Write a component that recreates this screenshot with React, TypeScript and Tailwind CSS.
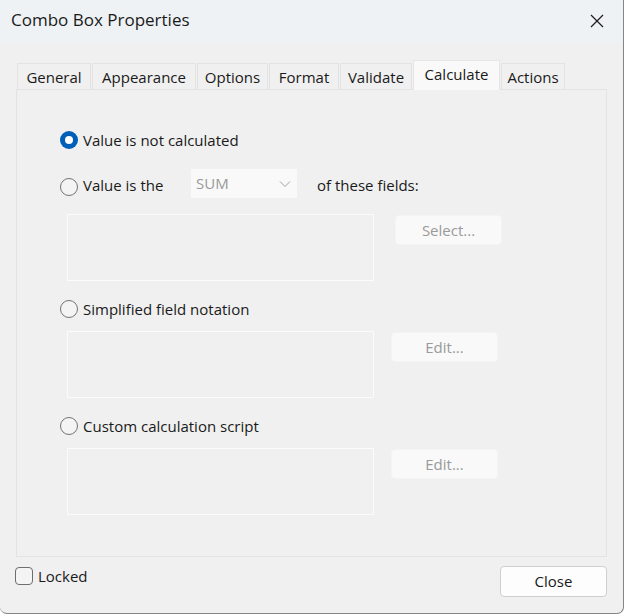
import React from "react";

const font = { fontFamily: '"Open Sans", "Noto Sans", sans-serif' };

function Radio({ checked }: { checked?: boolean }) {
  if (checked) {
    return (
      <span className="flex h-[18px] w-[18px] shrink-0 items-center justify-center rounded-full bg-[#005fb8]">
        <span className="h-[8px] w-[8px] rounded-full bg-white" />
      </span>
    );
  }
  return <span className="block h-[18px] w-[18px] shrink-0 rounded-full border-[1.5px] border-[#737373] bg-[#f4f4f4]" />;
}

function Box() {
  return <div className="h-[67px] w-[307px] shrink-0 border border-[#fbfbfb]" />;
}

function DisabledButton({ label, className }: { label: string; className: string }) {
  return (
    <div
      className={`flex h-[30px] w-[107px] items-center justify-center rounded-[4px] border border-[#f4f4f4] bg-[#f9f9f9] text-[15px] text-[#9a9a9a] ${className}`}
    >
      {label}
    </div>
  );
}

const tabs = [
  { label: "General", w: 74 },
  { label: "Appearance", w: 104 },
  { label: "Options", w: 71 },
  { label: "Format", w: 70 },
  { label: "Validate", w: 72 },
  { label: "Calculate", w: 87, active: true },
  { label: "Actions", w: 64 },
];

export default function App() {
  return (
    <div className="h-[616px] w-[625px] bg-white" style={font}>
      <div className="flex h-[614px] w-[624px] flex-col overflow-hidden rounded-b-[7px] border-b border-r border-[#858585] bg-[#f0f0f0] text-[#1a1a1a]">
        {/* Title bar */}
        <div className="flex h-[42px] shrink-0 items-center justify-between bg-[#eef2f5] pl-[11px] pr-[19px]">
          <span className="pb-[2px] text-[17px] text-[#1a1a1a]">Combo Box Properties</span>
          <svg width="14" height="14" viewBox="0 0 14 14" fill="none" stroke="#1a1a1a" strokeWidth="1.2">
            <path d="M1 1 L13 13 M13 1 L1 13" />
          </svg>
        </div>

        {/* Tabs */}
        <div className="mt-[19px] flex h-[29px] items-end pl-[17px]">
          {tabs.map((t) =>
            t.active ? (
              <div
                key={t.label}
                className="relative z-10 mr-[1px] flex h-[30px] items-center justify-center border border-b-0 border-[#e6e6e6] bg-[#f9f9f9] pb-[3px] text-[15px]"
                style={{ width: t.w }}
              >
                {t.label}
              </div>
            ) : (
              <div
                key={t.label}
                className="mr-[1px] flex h-[27px] items-center justify-center border border-b-0 border-[#e3e3e3] bg-[#f0f0f0] text-[15px]"
                style={{ width: t.w }}
              >
                {t.label}
              </div>
            )
          )}
        </div>

        {/* Panel */}
        <div className="-mt-[1px] ml-[16px] flex h-[468px] w-[591px] flex-col border border-[#e3e3e3] pl-[43px] text-[15px]">
          <div className="mt-[40px] flex h-[20px] items-center gap-[5px]">
            <Radio checked />
            <span>Value is not calculated</span>
          </div>

          <div className="mt-[19px] flex h-[29px] items-start">
            <div className="mt-[9px] flex shrink-0">
              <Radio />
            </div>
            <span className="ml-[5px] mt-[6px] w-[108px] shrink-0 leading-[20px]">Value is the</span>
            <div className="flex h-[29px] w-[106px] shrink-0 items-center justify-between bg-[#f9f9f9] pl-[5px] pr-[6px] text-[#9a9a9a]">
              <span>SUM</span>
              <svg width="12" height="8" viewBox="0 0 12 8" fill="none" stroke="#a0a0a0" strokeWidth="1">
                <path d="M1 1.5 L6 6.5 L11 1.5" />
              </svg>
            </div>
            <span className="ml-[20px] mt-[6px] leading-[20px]">of these fields:</span>
          </div>

          <div className="mt-[16px] flex items-start">
            <div className="ml-[7px]">
              <Box />
            </div>
            <DisabledButton label="Select..." className="ml-[21px] mt-[1px]" />
          </div>

          <div className="mt-[18px] flex h-[20px] items-center gap-[5px]">
            <Radio />
            <span>Simplified field notation</span>
          </div>

          <div className="mt-[12px] flex items-start">
            <div className="ml-[7px]">
              <Box />
            </div>
            <DisabledButton label="Edit..." className="ml-[17px] mt-[1px]" />
          </div>

          <div className="mt-[18px] flex h-[20px] items-center gap-[5px]">
            <Radio />
            <span>Custom calculation script</span>
          </div>

          <div className="mt-[12px] flex items-start">
            <div className="ml-[7px]">
              <Box />
            </div>
            <DisabledButton label="Edit..." className="ml-[17px] mt-[1px]" />
          </div>
        </div>

        {/* Footer */}
        <div className="mt-[9px] flex items-start justify-between pl-[15px] pr-[16px] text-[15px]">
          <div className="-mt-[1px] flex items-center gap-[5px]">
            <span className="h-[18px] w-[18px] rounded-[4px] border-[1.5px] border-[#6e6e6e] bg-[#f4f4f4]" />
            <span>Locked</span>
          </div>
          <button className="flex h-[31px] w-[107px] items-center justify-center rounded-[4px] border border-[#cfcfcf] bg-[#fdfdfd] text-[15px] text-[#1a1a1a]">
            Close
          </button>
        </div>
      </div>
    </div>
  );
}
